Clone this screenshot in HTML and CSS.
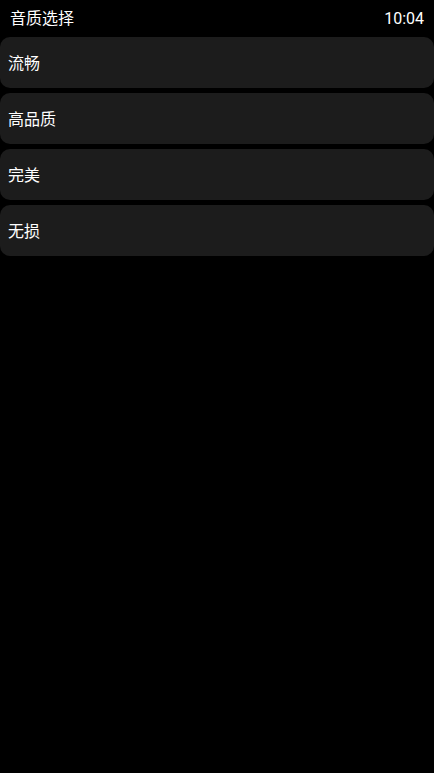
FILE: index.html
```html
<!DOCTYPE html>
<html lang="zh">
<head>
<meta charset="utf-8">
<title>音质选择</title>
<link rel="stylesheet" href="styles.css">
</head>
<body>
<header class="top">
  <span class="title">音质选择</span>
  <span class="time">10:04</span>
</header>
<main class="list">
  <div class="item">流畅</div>
  <div class="item">高品质</div>
  <div class="item">完美</div>
  <div class="item">无损</div>
</main>
</body>
</html>
```
FILE: styles.css
```css
html, body {
  margin: 0;
  padding: 0;
  background: #000;
  color: #fff;
  font-family: Roboto, "Noto Sans CJK SC", sans-serif;
  height: 100%;
}
.top {
  height: 37px;
  box-sizing: border-box;
  display: flex;
  align-items: center;
  justify-content: space-between;
  padding: 0 10px 0 10px;
  font-size: 16px;
}
.title, .time {
  line-height: 1;
}
.list {
  display: flex;
  flex-direction: column;
  gap: 5px;
}
.item {
  height: 51px;
  box-sizing: border-box;
  background: #1c1c1c;
  border-radius: 10px;
  display: flex;
  align-items: center;
  padding: 0 0 2px 8px;
  font-size: 16px;
}
```
